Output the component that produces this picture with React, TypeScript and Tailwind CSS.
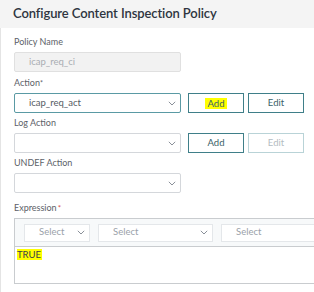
import React from "react";

function Chevron() {
  return (
    <svg width="8" height="5" viewBox="0 0 8 5" fill="none" className="shrink-0">
      <path d="M0.8 0.8l3.2 3.2 3.2-3.2" stroke="#8a9099" strokeWidth="1" />
    </svg>
  );
}

type SelectProps = {
  value?: string;
  active?: boolean;
};

function SelectBox({ value, active }: SelectProps) {
  return (
    <div
      className={
        active
          ? "w-[167px] h-[20px] border border-[#5a9aa4] rounded-[2px] bg-white flex items-center justify-between pl-[14px] pr-[4px]"
          : "w-[167px] h-[20px] border border-[#d4d7db] rounded-[2px] bg-white flex items-center justify-between pl-[14px] pr-[4px]"
      }
    >
      <span className="text-[9.5px] text-[#555b63]">{value}</span>
      <Chevron />
    </div>
  );
}

function Label({ text, star }: { text: string; star?: "plain" | "red" }) {
  return (
    <div className="h-[12px] leading-[12px] text-[9px] text-[#5c6168] mb-[4px]">
      {text}
      {star === "plain" && <span className="text-[7px] align-top">*</span>}
      {star === "red" && <span className="text-[#d9534f] text-[8px] align-top ml-[1px]">*</span>}
    </div>
  );
}

function Btn({ text, highlight, disabled }: { text: string; highlight?: boolean; disabled?: boolean }) {
  return (
    <div
      className={
        disabled
          ? "w-[56px] h-[20px] border border-[#b9d3d7] flex items-center justify-center text-[9.5px] text-[#b3bcc2]"
          : "w-[56px] h-[20px] border border-[#3f7f89] flex items-center justify-center text-[9.5px] text-[#3a5f68]"
      }
    >
      {highlight ? <span className="bg-[#ffff00] px-[3px] leading-[11px]">{text}</span> : text}
    </div>
  );
}

function ExprSelect({ w, chevron }: { w: string; chevron?: boolean }) {
  return (
    <div className={`${w} h-[18px] shrink-0 bg-white border border-[#e4e7ea] flex items-center justify-between pl-[14px] pr-[4px]`}>
      <span className="text-[9.5px] text-[#9aa1a9]">Select</span>
      {chevron && <Chevron />}
    </div>
  );
}

export default function App() {
  return (
    <div className="w-[314px] h-[292px] overflow-hidden bg-white" style={{ fontFamily: "Lato, 'Open Sans', sans-serif" }}>
      <div className="h-[28px] bg-[#f4f4f4] flex items-center pl-[13px]">
        <h1 className="text-[13px] font-semibold text-[#2e3540] tracking-[-0.1px]">Configure Content Inspection Policy</h1>
      </div>
      <div className="h-[264px] border-l border-[#e4e4e4] pl-[13px] pt-[8px]">
        <Label text="Policy Name" />
        <div className="w-[167px] h-[20px] bg-[#f2f2f2] border border-[#e0e0e0] rounded-[2px] flex items-center pl-[14px]">
          <span className="text-[9.5px] text-[#a9adb2]">icap_req_ci</span>
        </div>

        <div className="mt-[5px]">
          <Label text="Action" star="plain" />
          <div className="flex gap-[7px]">
            <SelectBox value="icap_req_act" active />
            <div className="flex gap-[4px]">
              <Btn text="Add" highlight />
              <Btn text="Edit" />
            </div>
          </div>
        </div>

        <div className="mt-[4px]">
          <Label text="Log Action" />
          <div className="flex gap-[7px]">
            <SelectBox />
            <div className="flex gap-[4px]">
              <Btn text="Add" />
              <Btn text="Edit" disabled />
            </div>
          </div>
        </div>

        <div className="mt-[4px]">
          <Label text="UNDEF Action" />
          <SelectBox />
        </div>

        <div className="mt-[9px]">
          <Label text="Expression" star="red" />
          <div className="w-[320px] h-[66px] border border-[#c9cccf]">
            <div className="h-[28px] bg-[#f7f9fa] border-b border-[#c9cccf] flex items-center gap-[8px] pl-[9px]">
              <ExprSelect w="w-[66px]" chevron />
              <ExprSelect w="w-[115px]" chevron />
              <ExprSelect w="w-[110px]" />
            </div>
            <div className="pl-[2px] pt-[3px] text-[9.5px] leading-[10px] text-[#3b4048]">
              <span className="bg-[#ffff00] pr-[1px]">TRUE</span>
            </div>
          </div>
        </div>
      </div>
    </div>
  );
}
